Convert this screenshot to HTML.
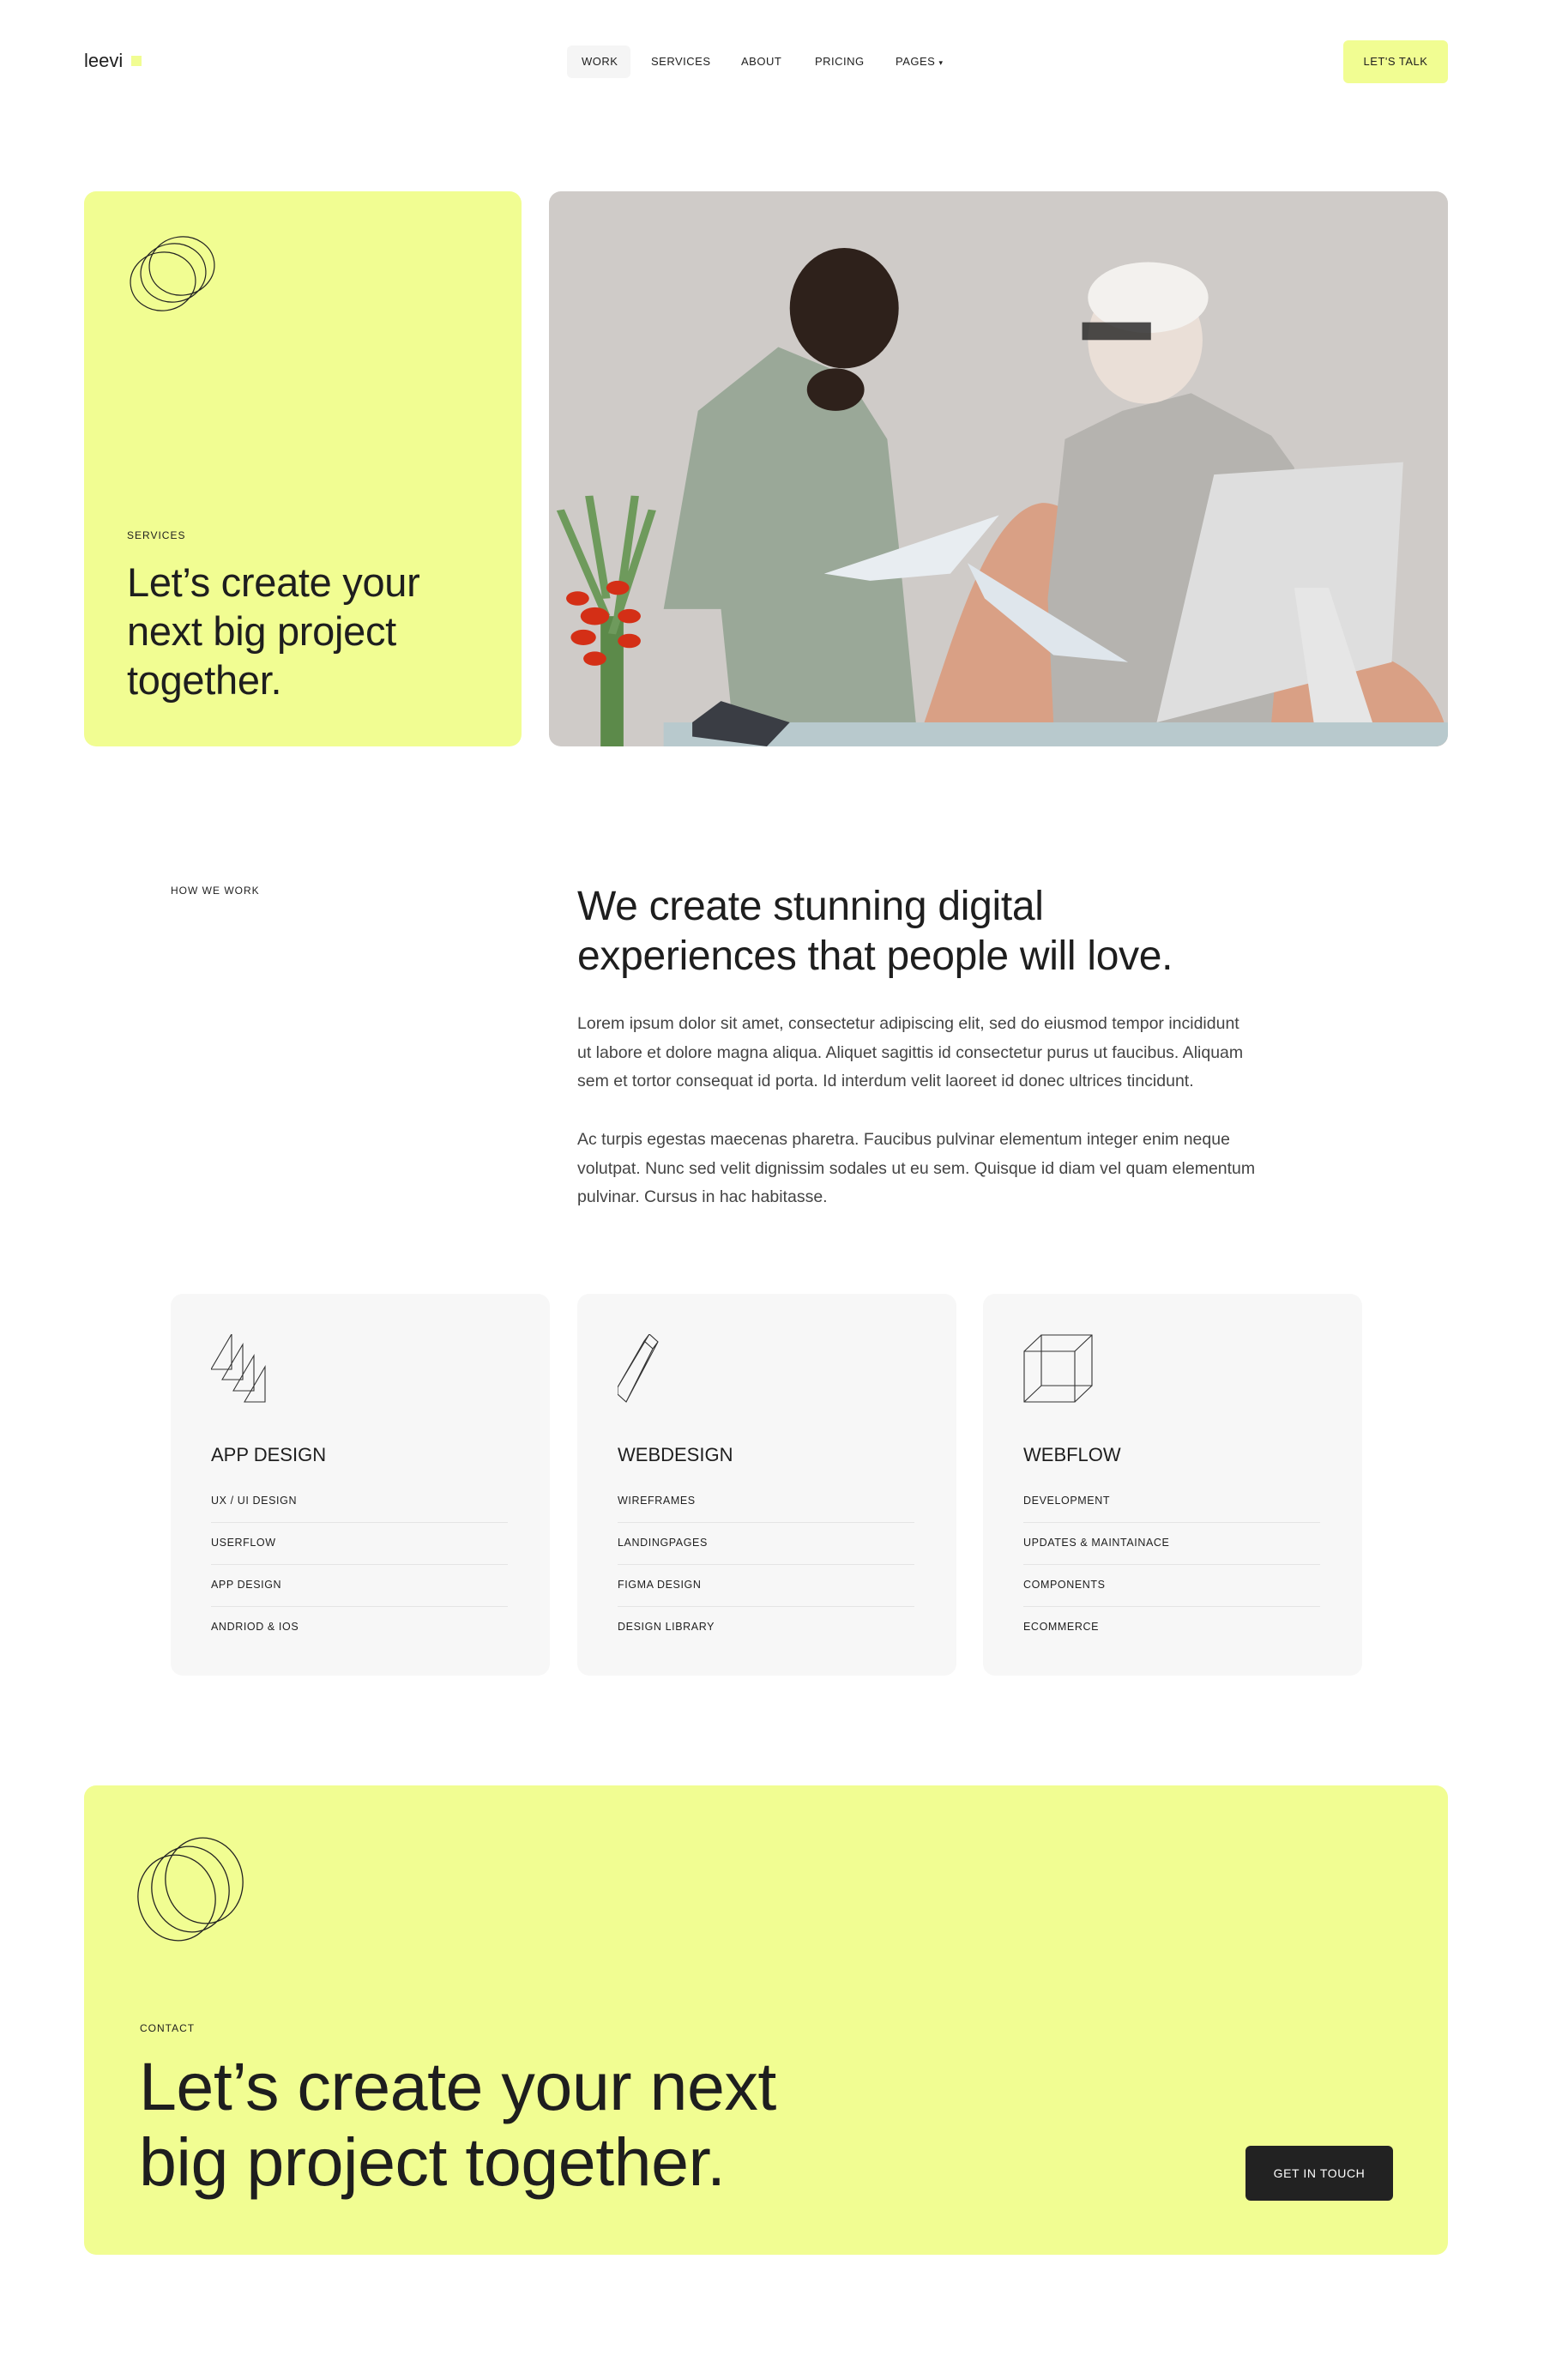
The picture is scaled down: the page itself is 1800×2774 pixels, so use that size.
<!DOCTYPE html>
<html><head><meta charset="utf-8"><style>
*{margin:0;padding:0;box-sizing:border-box}
body{width:1800px;height:2774px;background:#fff;font-family:"Liberation Sans",sans-serif;color:#1e1e1e;position:relative;overflow:hidden}
.a{position:absolute}
.nav{font-size:13px;letter-spacing:.5px;top:64px}
.y{background:#f1fd92}
.lbl{font-size:12px;letter-spacing:1px}
.card{background:#f7f7f7;border-radius:14px;width:442px;height:445px;top:1508px}
.card .t{position:absolute;left:47px;top:175px;font-size:22px}
.card .it{width:346px;font-size:12.5px;line-height:15px;letter-spacing:.6px;border-bottom:1px solid #e4e4e4;padding-bottom:17px;margin-bottom:16px}
.card .it:last-child{border:none}
.p{font-size:19.5px;line-height:33.5px;color:#444;width:860px}
</style></head><body>
<div class="a" style="left:98px;top:58px;font-size:22px">leevi</div>
<div class="a y" style="left:153px;top:65px;width:12px;height:12px"></div>
<div class="a" style="left:661px;top:53px;width:74px;height:38px;background:#f5f5f5;border-radius:6px"></div>
<div class="a nav" style="left:678px">WORK</div>
<div class="a nav" style="left:759px">SERVICES</div>
<div class="a nav" style="left:864px">ABOUT</div>
<div class="a nav" style="left:950px">PRICING</div>
<div class="a nav" style="left:1044px">PAGES <span style="font-size:9px">▾</span></div>
<div class="a y" style="left:1566px;top:47px;width:122px;height:50px;border-radius:6px;font-size:13px;letter-spacing:.5px;text-align:center;line-height:50px">LET'S TALK</div>

<div class="a y" style="left:98px;top:223px;width:510px;height:647px;border-radius:14px"></div>
<svg class="a" style="left:140px;top:262px" width="120" height="120" viewBox="0 0 120 120" fill="none" stroke="#222" stroke-width="1.2"><ellipse cx="50" cy="66" rx="38" ry="34" transform="rotate(-8 50 66)"/><ellipse cx="62" cy="56" rx="38" ry="34" transform="rotate(-8 62 56)"/><ellipse cx="72" cy="48" rx="38" ry="34" transform="rotate(-8 72 48)"/></svg>
<div class="a lbl" style="left:148px;top:617px">SERVICES</div>
<div class="a" style="left:148px;top:650px;font-size:47px;line-height:57px;letter-spacing:-.3px">Let’s create your<br>next big project<br>together.</div>

<svg class="a" style="left:640px;top:223px;border-radius:14px" width="1048" height="647" viewBox="0 0 1568 1568" preserveAspectRatio="none">
<rect width="1568" height="1568" fill="#cfcbc8"/>
<path d="M640 1568 C700 1300 760 900 860 880 C960 880 1000 1200 1100 1300 L1400 1300 C1500 1300 1568 1450 1568 1568Z" fill="#d9a085"/>
<path d="M200 1180 L260 620 L400 440 L520 520 L590 700 L610 1000 L640 1500 L320 1500 L300 1180Z" fill="#9aa898"/>
<ellipse cx="515" cy="330" rx="95" ry="170" fill="#2e211b"/>
<ellipse cx="500" cy="560" rx="50" ry="60" fill="#2e211b"/>
<path d="M870 1150 L900 700 L1000 620 L1120 570 L1260 690 L1300 780 L1260 1500 L880 1500Z" fill="#b5b3af"/>
<ellipse cx="1040" cy="420" rx="100" ry="180" fill="#eadfd7"/>
<ellipse cx="1045" cy="300" rx="105" ry="100" fill="#f3f1ee"/>
<rect x="930" y="370" width="120" height="50" fill="#222" opacity=".8"/>
<path d="M480 1080 L785 915 L700 1080 L560 1100Z" fill="#e8edf1"/>
<path d="M730 1050 L1010 1330 L880 1310 L760 1150Z" fill="#dfe6ec"/>
<path d="M1160 800 L1490 765 L1470 1330 L1060 1500Z" fill="#dedede"/>
<path d="M1300 1120 L1360 1120 L1450 1568 L1340 1568Z" fill="#e6e6e6"/>
<rect x="200" y="1500" width="1368" height="68" fill="#b8c9cd"/>
<path d="M250 1500 L300 1440 L420 1500 L380 1568 L250 1540Z" fill="#3a3d44"/>
<rect x="90" y="1200" width="40" height="368" fill="#5c8a4a"/>
<path d="M20 900 L100 1200 M70 860 L100 1150 M150 860 L120 1200 M180 900 L110 1250" stroke="#6e9a5c" stroke-width="14"/>
<g fill="#d42f16"><circle cx="50" cy="1150" r="20"/><circle cx="120" cy="1120" r="20"/><circle cx="80" cy="1200" r="25"/><circle cx="140" cy="1200" r="20"/><circle cx="60" cy="1260" r="22"/><circle cx="140" cy="1270" r="20"/><circle cx="80" cy="1320" r="20"/></g>
</svg>

<div class="a lbl" style="left:199px;top:1031px;font-size:12px">HOW WE WORK</div>
<div class="a" style="left:673px;top:1028px;font-size:48px;line-height:58px;letter-spacing:-.3px">We create stunning digital<br>experiences that people will love.</div>
<div class="a p" style="left:673px;top:1177px">Lorem ipsum dolor sit amet, consectetur adipiscing elit, sed do eiusmod tempor incididunt<br>ut labore et dolore magna aliqua. Aliquet sagittis id consectetur purus ut faucibus. Aliquam<br>sem et tortor consequat id porta. Id interdum velit laoreet id donec ultrices tincidunt.</div>
<div class="a p" style="left:673px;top:1312px">Ac turpis egestas maecenas pharetra. Faucibus pulvinar elementum integer enim neque<br>volutpat. Nunc sed velit dignissim sodales ut eu sem. Quisque id diam vel quam elementum<br>pulvinar. Cursus in hac habitasse.</div>

<div class="a card" style="left:199px">
<svg class="a" style="left:47px;top:47px" width="82" height="82" viewBox="0 0 82 82" fill="none" stroke="#333" stroke-width="1.1"><path d="M0 41 L24 0 V41Z M13 53 L37 12 V53Z M26 66 L50 25 V66Z M39 79 L63 38 V79Z"/></svg>
<div class="t">APP DESIGN</div>
<div style="position:absolute;top:234px;left:47px">
<div class="it">UX / UI DESIGN</div><div class="it">USERFLOW</div><div class="it">APP DESIGN</div><div class="it">ANDRIOD &amp; IOS</div></div></div>

<div class="a card" style="left:673px">
<svg class="a" style="left:47px;top:47px" width="82" height="82" viewBox="0 0 82 82" fill="none" stroke="#333" stroke-width="1.1"><path d="M0 62 L37 0 L47 9 L10 79 L0 70Z M37 0 L31 8 L41 17 L47 9 M31 8 L0 62 M41 17 L10 79"/></svg>
<div class="t">WEBDESIGN</div>
<div style="position:absolute;top:234px;left:47px">
<div class="it">WIREFRAMES</div><div class="it">LANDINGPAGES</div><div class="it">FIGMA DESIGN</div><div class="it">DESIGN LIBRARY</div></div></div>

<div class="a card" style="left:1146px">
<svg class="a" style="left:47px;top:47px" width="82" height="82" viewBox="0 0 82 82" fill="none" stroke="#333" stroke-width="1.1"><path d="M1 20 H60 V79 H1Z M21 1 H80 V60 H21Z M1 20 L21 1 M60 20 L80 1 M60 79 L80 60 M1 79 L21 60"/></svg>
<div class="t">WEBFLOW</div>
<div style="position:absolute;top:234px;left:47px">
<div class="it">DEVELOPMENT</div><div class="it">UPDATES &amp; MAINTAINACE</div><div class="it">COMPONENTS</div><div class="it">ECOMMERCE</div></div></div>

<div class="a y" style="left:98px;top:2081px;width:1590px;height:547px;border-radius:14px"></div>
<svg class="a" style="left:158px;top:2140px" width="130" height="126" viewBox="0 0 130 126" fill="none" stroke="#222" stroke-width="1.3"><ellipse cx="48" cy="72" rx="45" ry="50" transform="rotate(-10 48 72)"/><ellipse cx="64" cy="62" rx="45" ry="50" transform="rotate(-10 64 62)"/><ellipse cx="80" cy="52" rx="45" ry="50" transform="rotate(-10 80 52)"/></svg>
<div class="a lbl" style="left:163px;top:2357px">CONTACT</div>
<div class="a" style="left:162px;top:2388px;font-size:79px;line-height:88px;letter-spacing:-.5px">Let’s create your next<br>big project together.</div>
<div class="a" style="left:1452px;top:2501px;width:172px;height:64px;background:#222;border-radius:6px;color:#fff;font-size:14px;letter-spacing:.6px;text-align:center;line-height:64px">GET IN TOUCH</div>
</body></html>
